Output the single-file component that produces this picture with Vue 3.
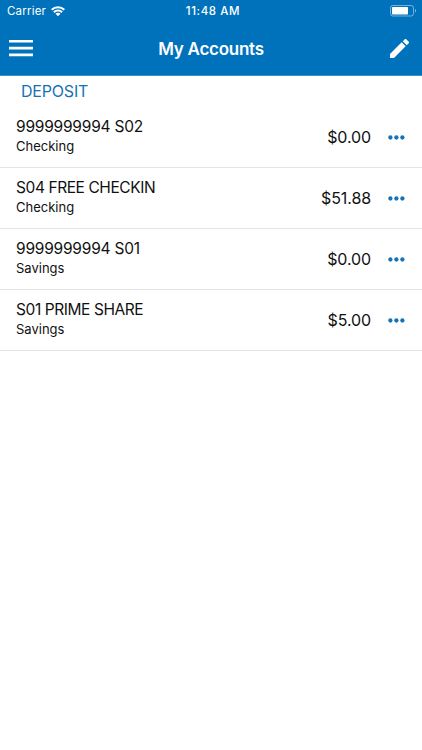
<template>
  <div class="screen">
    <header class="header">
      <div class="status-bar">
        <div class="carrier">
          <span>Carrier</span>
          <svg class="wifi" viewBox="0 0 14 10">
            <path d="M0 3.1a10 10 0 0 1 14 0l-1.4 1.5a8 8 0 0 0-11.2 0z" />
            <path d="M2.2 5.5a6.7 6.7 0 0 1 9.6 0l-1.4 1.5a4.8 4.8 0 0 0-6.8 0z" />
            <path d="M4.5 7.8a3.4 3.4 0 0 1 5 0L7 10.2z" />
          </svg>
        </div>
        <span class="time">11:48 AM</span>
        <svg class="battery" viewBox="0 0 27 12">
          <rect class="shell" x="0.5" y="0.5" width="23" height="10.5" rx="2.4" />
          <rect x="2" y="2" width="16" height="7.5" rx="0.8" />
          <path class="tip" d="M25 4c1.6.5 1.6 3 0 3.5z" />
        </svg>
      </div>
      <div class="nav-bar">
        <button class="icon-button" aria-label="Menu">
          <svg class="menu" viewBox="0 0 24 17">
            <path d="M0 0h24v2.6H0zM0 6.8h24v2.6H0zM0 13.6h24v2.6H0z" />
          </svg>
        </button>
        <h1 class="title">My Accounts</h1>
        <button class="icon-button" aria-label="Edit">
          <svg class="pencil" viewBox="3 3 18 18">
            <path
              d="M3 17.25V21h3.75L17.81 9.94l-3.75-3.75L3 17.25zM20.71 7.04a1 1 0 0 0 0-1.41l-2.34-2.34a1 1 0 0 0-1.41 0l-1.83 1.83 3.75 3.75 1.83-1.83z"
            />
          </svg>
        </button>
      </div>
    </header>

    <main>
      <h2 class="section-title">DEPOSIT</h2>
      <ul class="accounts">
        <li v-for="account in accounts" :key="account.name" class="account">
          <div class="info">
            <div class="name" :class="{ numeric: /^\d/.test(account.name) }">
              {{ account.name }}
            </div>
            <div class="type">{{ account.type }}</div>
          </div>
          <span class="balance">{{ account.balance }}</span>
          <button class="icon-button" aria-label="More">
            <svg class="more" viewBox="0 0 17 5">
              <circle cx="2.4" cy="2.5" r="2.15" />
              <circle cx="8.4" cy="2.5" r="2.15" />
              <circle cx="14.4" cy="2.5" r="2.15" />
            </svg>
          </button>
        </li>
      </ul>
    </main>
  </div>
</template>

<script setup>
const accounts = [
  { name: '9999999994 S02', type: 'Checking', balance: '$0.00' },
  { name: 'S04 FREE CHECKIN', type: 'Checking', balance: '$51.88' },
  { name: '9999999994 S01', type: 'Savings', balance: '$0.00' },
  { name: 'S01 PRIME SHARE', type: 'Savings', balance: '$5.00' }
]
</script>

<style>
body {
  background: #fff;
}
</style>

<style scoped>
.screen {
  min-height: 750px;
  font-family: Inter, "Liberation Sans", sans-serif;
  color: #111;
  background: #fff;
}

svg {
  display: block;
  fill: currentColor;
}

.header {
  box-sizing: border-box;
  height: 76px;
  color: #fff;
  background: #0072bc;
  border-bottom: 1px solid #3a8fcb;
}

.status-bar {
  display: grid;
  grid-template-columns: 1fr auto 1fr;
  align-items: center;
  height: 22px;
  padding: 0 5px 0 7px;
  font-size: 11.5px;
}

.carrier {
  display: flex;
  align-items: center;
  gap: 5px;
  letter-spacing: 0.2px;
}

.wifi {
  width: 14px;
  height: 10px;
}

.time {
  padding-left: 2px;
  font-weight: 500;
  letter-spacing: 0.6px;
}

.battery {
  justify-self: end;
  width: 27px;
  height: 12px;
}

.shell {
  fill: none;
  stroke: #fff;
  stroke-opacity: 0.45;
}

.tip {
  fill-opacity: 0.5;
}

.nav-bar {
  display: grid;
  grid-template-columns: 1fr auto 1fr;
  align-items: center;
  height: 53px;
  padding: 0 9px;
}

.icon-button {
  justify-self: start;
  padding: 0;
  color: inherit;
  background: none;
  border: 0;
}

.icon-button:last-child {
  justify-self: end;
}

.menu {
  width: 24px;
  height: 17px;
}

.title {
  margin: 0;
  font-size: 17px;
  font-weight: 600;
  letter-spacing: -0.25px;
}

.pencil {
  width: 19px;
  height: 19px;
  margin-right: 4px;
}

.section-title {
  margin: 0;
  padding-left: 21px;
  font-size: 16px;
  font-weight: 400;
  line-height: 31px;
  letter-spacing: -0.2px;
  color: #1673b3;
}

.accounts {
  margin: 0;
  padding: 0;
  list-style: none;
}

.account {
  display: flex;
  align-items: center;
  box-sizing: border-box;
  height: 61px;
  padding: 0 17px 0 16px;
  border-bottom: 1px solid #e4e4e4;
}

.info {
  flex: 1;
  padding-bottom: 2px;
}

.name {
  font-size: 15.5px;
  line-height: 20px;
  letter-spacing: -0.42px;
}

.name.numeric {
  letter-spacing: -0.22px;
}

.type {
  font-size: 13px;
  line-height: 19px;
}

.balance {
  margin-right: 17px;
  font-size: 16px;
  letter-spacing: -0.1px;
}

.more {
  width: 17px;
  height: 5px;
  color: #1673b8;
}
</style>
